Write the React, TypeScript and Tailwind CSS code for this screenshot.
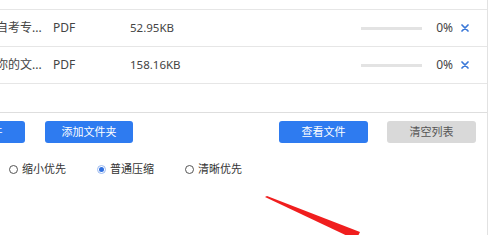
import React from 'react';

const files = [
  { name: '自考专...', type: 'PDF', size: '52.95KB', progress: 0 },
  { name: '你的文...', type: 'PDF', size: '158.16KB', progress: 0 },
];

function Radio({ label, checked }: { label: string; checked?: boolean }) {
  return (
    <label className="flex items-center gap-[4px] text-[11px] text-[#333]">
      {checked ? (
        <span className="w-[9px] h-[9px] rounded-full border border-[#9bb9ef] bg-white flex items-center justify-center">
          <span className="w-[5px] h-[5px] rounded-full bg-[#2f6fe0]" />
        </span>
      ) : (
        <span className="w-[9px] h-[9px] rounded-full border border-[#555] bg-white" />
      )}
      {label}
    </label>
  );
}

export default function App() {
  return (
    <div
      className="relative w-[500px] h-[235px] overflow-hidden bg-white"
      style={{ fontFamily: '"Noto Sans", "Noto Sans CJK SC", sans-serif' }}
    >
      <div className="w-[488px] h-full border-r border-[#e2e2e2]">
        {/* file table */}
        <div className="pt-[9px] h-[113px] border-b border-[#dedede]">
          {files.map((f, i) => (
            <div key={i} className="h-[37px] border-t border-[#e6e6e6] flex items-center text-[12px] text-[#444]">
              <div className="w-[53px] -ml-[4px] shrink-0">{f.name}</div>
              <div className="w-[77px] shrink-0 ml-[4px]">{f.type}</div>
              <div className="w-[231px] shrink-0 text-[11.5px]">{f.size}</div>
              <div className="w-[61px] h-[3px] bg-[#e3e3e3] shrink-0">
                <div className="h-full bg-[#2f6fe0]" style={{ width: `${f.progress}%` }} />
              </div>
              <div className="w-[31px] text-right shrink-0">{f.progress}%</div>
              <svg className="ml-[8px]" width="8" height="8" viewBox="0 0 8 8">
                <path d="M1 1 L7 7 M7 1 L1 7" stroke="#3a78d8" strokeWidth="1.7" strokeLinecap="round" />
              </svg>
            </div>
          ))}
          <div className="border-t border-[#e6e6e6]" />
        </div>

        {/* buttons */}
        <div className="flex items-center mt-[8px] h-[22px] -ml-[64px]">
          <button className="w-[89px] h-[22px] bg-[#2e7bf0] rounded-[3px] text-white text-[11px]">添加文件</button>
          <button className="ml-[20px] w-[88px] h-[22px] bg-[#2e7bf0] rounded-[3px] text-white text-[11px]">添加文件夹</button>
          <button className="ml-[146px] w-[89px] h-[22px] bg-[#2e7bf0] rounded-[3px] text-white text-[11px]">查看文件</button>
          <button className="ml-[19px] w-[89px] h-[22px] bg-[#d9d9d9] rounded-[3px] text-[#555] text-[11px]">清空列表</button>
        </div>

        {/* compression mode */}
        <div className="flex items-center mt-[18px] pl-[9px]">
          <Radio label="缩小优先" />
          <div className="ml-[31px]"><Radio label="普通压缩" checked /></div>
          <div className="ml-[31px]"><Radio label="清晰优先" /></div>
        </div>
      </div>

      {/* red annotation arrow */}
      <svg className="absolute left-0 top-0 pointer-events-none" width="500" height="235" viewBox="0 0 500 235">
        <polygon points="265,197 267,196 360,232 356,240" fill="#f01e1e" />
      </svg>
    </div>
  );
}
